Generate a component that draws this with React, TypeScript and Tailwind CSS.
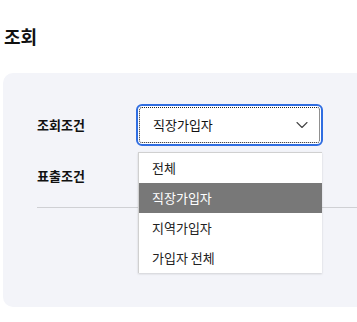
import { ChevronDown } from 'lucide-react';

const options = ['전체', '직장가입자', '지역가입자', '가입자 전체'];

export default function App() {
  const selected = '직장가입자';

  return (
    <div className="w-[357px] h-[322px] overflow-hidden bg-white font-['Noto_Sans_CJK_KR','Noto_Sans',sans-serif] text-[#111]">
      {/* 제목 */}
      <h2 className="pt-[23px] pl-[4px] text-[18px] leading-[26px] font-bold">조회</h2>

      {/* 조회 패널 */}
      <div className="relative mt-[24px] ml-[3px] w-[380px] h-[234px] rounded-[10px] bg-[#f3f4f9] pl-[34px] pt-[31px]">
        <div className="flex items-center h-[42px]">
          <div className="w-[99px] text-[13px] font-bold">조회조건</div>
          <div className="w-[187px] h-[42px] rounded-[6px] border-2 border-[#2f6de1] bg-white p-[1px]">
            <div className="h-full rounded-[3px] border border-dotted border-[#222] flex items-center justify-between pl-[13px] pr-[7px]">
              <span className="text-[13px]">{selected}</span>
              <ChevronDown className="w-[20px] h-[20px] text-[#444]" strokeWidth={1.3} />
            </div>
          </div>
        </div>

        <div className="flex items-center h-[42px] mt-[9px]">
          <div className="w-[99px] text-[13px] font-bold">표출조건</div>
        </div>

        <div className="mt-[10px] h-px bg-[#cfd0d4]" />

        {/* 드롭다운 목록 */}
        <ul className="absolute left-[135px] top-[79px] w-[184px] bg-white border-l border-t border-[#d0d0d0] shadow-[0_1px_2px_rgba(0,0,0,0.15)]">
          {options.map((o) => (
            <li
              key={o}
              className={`h-[30px] flex items-center pl-[13px] text-[13px] ${
                o === selected ? 'bg-[#787878] text-white' : 'text-[#222]'
              }`}
            >
              {o}
            </li>
          ))}
        </ul>
      </div>
    </div>
  );
}
